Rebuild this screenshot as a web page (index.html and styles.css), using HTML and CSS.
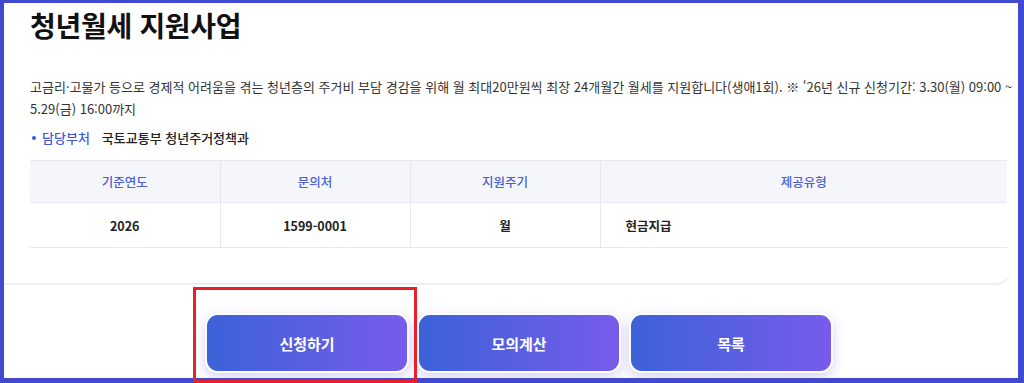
FILE: index.html
```html
<!DOCTYPE html>
<html lang="ko">
<head>
    <meta charset="UTF-8">
    <meta name="viewport" content="width=device-width, initial-scale=1.0">
    <title>청년월세 지원사업</title>
    <link rel="stylesheet" href="styles.css">
</head>
<body>
<div class="frame">
    <div class="card">
        <h1 class="title">청년월세 지원사업</h1>
        <p class="desc">고금리·고물가 등으로 경제적 어려움을 겪는 청년층의 주거비 부담 경감을 위해 월 최대20만원씩 최장 24개월간 월세를 지원합니다(생애1회). ※ '26년 신규 신청기간: 3.30(월) 09:00 ~ 5.29(금) 16:00까지</p>
        <div class="dept">
            <span class="dept-label">담당부처</span>
            <span class="dept-name">국토교통부 청년주거정책과</span>
        </div>
        <table class="info-table">
            <thead>
                <tr>
                    <th>기준연도</th>
                    <th>문의처</th>
                    <th>지원주기</th>
                    <th>제공유형</th>
                </tr>
            </thead>
            <tbody>
                <tr>
                    <td>2026</td>
                    <td>1599-0001</td>
                    <td>월</td>
                    <td class="left">현금지급</td>
                </tr>
            </tbody>
        </table>
    </div>

    <div class="actions">
        <button type="button" class="action-button">신청하기</button>
        <button type="button" class="action-button">모의계산</button>
        <button type="button" class="action-button">목록</button>
    </div>

    <div class="highlight"></div>
</div>
</body>
</html>
```

FILE: styles.css
```css
* {
    box-sizing: border-box;
}

html, body {
    margin: 0;
    padding: 0;
    height: 100%;
    background-color: #fff;
}

body {
    font-family: "Noto Sans CJK KR", "Noto Sans", sans-serif;
    color: #222;
    overflow: hidden;
}

.frame {
    position: relative;
    width: 1024px;
    height: 383px;
    border-style: solid;
    border-color: #4149d0;
    border-width: 3px 6px 5px 4px;
    background-color: #fff;
}

.card {
    width: 1010px;
    padding: 3px 7px 35px 26px;
    border-bottom: 2px solid #eeeff2;
    border-bottom-right-radius: 20px;
}

.title {
    margin: 0;
    font-size: 28px;
    line-height: 38px;
    font-weight: 700;
    color: #111;
    letter-spacing: -0.3px;
}

.desc {
    margin: 32px -8px 0 0;
    font-size: 13px;
    line-height: 22px;
    color: #333;
}

.dept {
    margin-top: 8px;
    font-size: 13px;
    line-height: 20px;
    display: flex;
    gap: 12px;
}

.dept-label {
    color: #3f5bd8;
    font-weight: 500;
    padding-left: 12px;
    position: relative;
}

.dept-label::before {
    content: "";
    position: absolute;
    left: 2px;
    top: 8px;
    width: 4px;
    height: 4px;
    border-radius: 50%;
    background-color: #3f5bd8;
}

.dept-name {
    font-weight: 500;
    color: #222;
}

.info-table {
    margin-top: 12px;
    width: 977px;
    border-collapse: collapse;
    font-size: 12.5px;
    table-layout: fixed;
}

.info-table th,
.info-table td {
    border-left: 1px solid #e6e8ee;
    text-align: center;
}

.info-table th:first-child,
.info-table td:first-child {
    border-left: none;
}

.info-table th {
    width: 190px;
    height: 42px;
    background-color: #f4f6fb;
    color: #4a5fd6;
    font-weight: 500;
    border-top: 1px solid #e6e8ee;
    border-bottom: 1px solid #e6e8ee;
}

.info-table th:last-child {
    width: auto;
}

.info-table td {
    height: 45px;
    font-weight: 700;
    color: #222;
    border-bottom: 1px solid #e6e8ee;
}

.info-table td.left {
    text-align: left;
    padding-left: 25px;
}

.actions {
    display: flex;
    gap: 8px;
    padding: 28px 0 0 201px;
}

.action-button {
    width: 204px;
    height: 60px;
    border: 2px solid #fff;
    border-radius: 13px;
    background: linear-gradient(90deg, #3c62d8, #775ceb);
    color: #fff;
    font-family: inherit;
    font-size: 15px;
    font-weight: 700;
    cursor: pointer;
    box-shadow: 0 4px 12px rgba(90, 80, 200, 0.25);
}

.highlight {
    position: absolute;
    left: 189px;
    top: 284px;
    width: 224px;
    height: 96px;
    border: 3px solid #e8202a;
}
```
